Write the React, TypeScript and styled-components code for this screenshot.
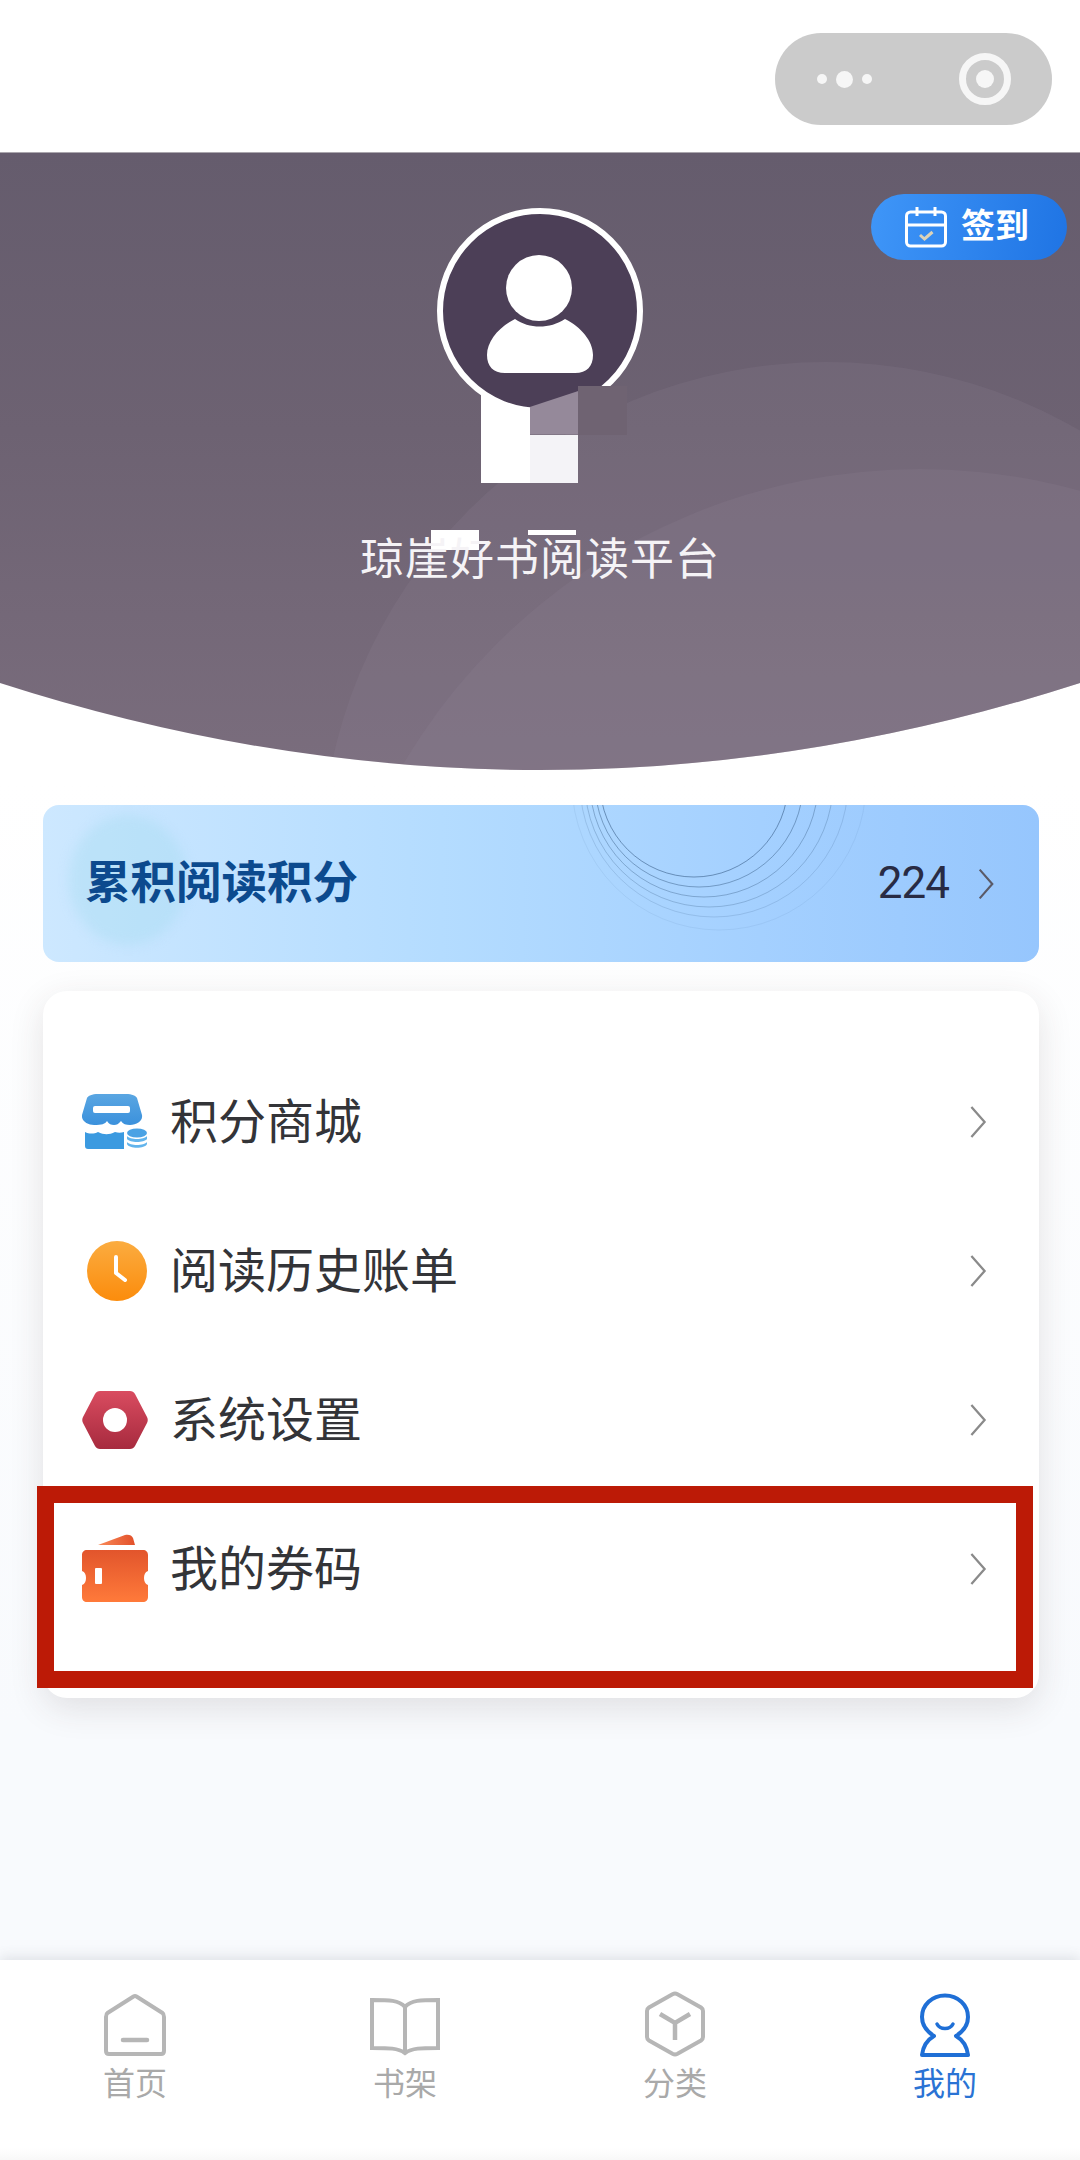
import styled, { createGlobalStyle } from "styled-components";
import { ReactNode } from "react";

const RING_RADII = [94, 104, 114, 124, 134, 147];

const MENU_ITEMS: { label: string; icon: ReactNode; marked?: boolean }[] = [
  { label: "积分商城", icon: <ShopIcon /> },
  { label: "阅读历史账单", icon: <ClockIcon /> },
  { label: "系统设置", icon: <NutIcon /> },
  { label: "我的券码", icon: <TicketIcon />, marked: true },
];

const TABS: { label: string; icon: ReactNode; active?: boolean }[] = [
  { label: "首页", icon: <HomeIcon /> },
  { label: "书架", icon: <BookIcon /> },
  { label: "分类", icon: <CubeIcon /> },
  { label: "我的", icon: <MeIcon />, active: true },
];

export default function App() {
  return (
    <Page>
      <GlobalStyle />
      <Header>
        <Capsule>
          <Dots>
            <Dot size={10} />
            <Dot size={17} />
            <Dot size={10} />
          </Dots>
          <Target />
        </Capsule>
      </Header>

      <Hero>
        <Swell size={1010} left={321} top={209} />
        <Swell size={1200} left={320} top={316} />
        <SignIn>
          <CalendarIcon />
          <SignInText>签到</SignInText>
        </SignIn>
        <Avatar>
          <PersonIcon />
        </Avatar>
        <Mosaic>
          <MosaicCell tone="#ffffff" />
          <MosaicCell tone="#95899a" raised cut="polygon(0 21px, 100% 5px, 100% 100%, 0 100%)" />
          <MosaicCell tone="#6f6372" raised />
          <MosaicCell tone="#ffffff" />
          <MosaicCell tone="#f4f3f7" />
        </Mosaic>
        <Title>
          <TitleMask left={71} width={48} height={20} />
          <TitleMask left={168} width={48} height={5} />
          <TitleText>琼崖好书阅读平台</TitleText>
        </Title>
      </Hero>

      <PointsCard>
        <PointsGlow />
        <Rings viewBox="0 0 400 157" aria-hidden="true">
          {RING_RADII.map((r, i) => (
            <circle
              key={r}
              cx={200 + i * 5}
              cy="-22"
              r={r}
              fill="none"
              stroke="#33577f"
              strokeWidth="0.8"
              opacity={0.7 - i * 0.12}
            />
          ))}
        </Rings>
        <PointsLabel>累积阅读积分</PointsLabel>
        <PointsValue>224</PointsValue>
        <Chevron size={18} height={36} color="#5a5a68" />
      </PointsCard>

      <Menu>
        {MENU_ITEMS.map((item) => (
          <MenuRow key={item.label}>
            <MenuIcon>{item.icon}</MenuIcon>
            <MenuLabel>{item.label}</MenuLabel>
            <Chevron size={20} height={34} color="#8a8a8a" />
            {item.marked ? <Marker /> : null}
          </MenuRow>
        ))}
      </Menu>

      <Spacer />

      <TabBar>
        {TABS.map((tab) => (
          <Tab key={tab.label} active={tab.active}>
            <TabIcon>{tab.icon}</TabIcon>
            {tab.label}
          </Tab>
        ))}
      </TabBar>
    </Page>
  );
}

function Chevron({ size, height, color }: { size: number; height: number; color: string }) {
  return (
    <ChevronSvg width={size} height={height} viewBox="0 0 20 36" fill="none" aria-hidden="true">
      <path d="M3 2l14 16L3 34" stroke={color} strokeWidth="2.4" />
    </ChevronSvg>
  );
}

function CalendarIcon() {
  return (
    <svg width="42" height="42" viewBox="0 0 42 42" fill="none" aria-hidden="true">
      <rect x="1.5" y="6" width="39" height="34" rx="4" stroke="#fff" strokeWidth="3" />
      <path d="M1.5 19h39M12 1v9M30 1v9" stroke="#fff" strokeWidth="3" />
      <path d="M15 29l4.500 4 8-7" stroke="#dcd3b8" strokeWidth="3" />
    </svg>
  );
}

function PersonIcon() {
  return (
    <svg width="106" height="118" viewBox="0 0 106 118" aria-hidden="true">
      <circle cx="52" cy="33" r="33" fill="#fff" />
      <path
        d="M28 64c14 10 35 10 50 0 16 8 28 22 28 36 0 11-6 18-18 18H18C6 118 0 111 0 100c0-14 12-28 28-36z"
        fill="#fff"
      />
    </svg>
  );
}

function ShopIcon() {
  return (
    <svg width="68" height="56" viewBox="0 0 68 56" aria-hidden="true">
      <defs>
        <linearGradient id="awning" x1="0" y1="0" x2="0" y2="1">
          <stop offset="0" stopColor="#5aa6e2" />
          <stop offset="1" stopColor="#3b91dc" />
        </linearGradient>
      </defs>
      <path
        d="M16 0h28c6 0 10 2 11 4l5 17c1 6-5 10-12 10-4 0-7-1-9-4-3 3-4 4-7 4s-5-1-7-4c-2 3-5 4-13 4-6 0-13-4-12-10l5-17c1-2 5-4 11-4z"
        fill="url(#awning)"
      />
      <rect x="11" y="12" width="37" height="7" rx="2" fill="#fff" />
      <path d="M3 38c4 2 9 2 13 0 6 3 11 3 17 0 3 1 6 1 9 0v17H6c-2 0-3-1-3-3z" fill="#3b9ae0" />
      <ellipse cx="55" cy="39" rx="10" ry="4.500" fill="#4aa2e4" />
      <path d="M45 42c3 4 17 4 20 0v3c-3 4-17 4-20 0z" fill="#62b4ec" />
      <path d="M45 48c3 4 17 4 20 0v2c-2 5-18 5-20 0z" fill="#62b4ec" />
    </svg>
  );
}

function ClockIcon() {
  return (
    <ClockSvg width="62" height="62" viewBox="0 0 62 62" aria-hidden="true">
      <defs>
        <linearGradient id="clock" x1="0" y1="0" x2="0" y2="1">
          <stop offset="0" stopColor="#fbac40" />
          <stop offset="1" stopColor="#fb8c0c" />
        </linearGradient>
      </defs>
      <circle cx="31" cy="31" r="30" fill="url(#clock)" />
      <path d="M30 17v16l9 7" fill="none" stroke="#fff" strokeWidth="4" strokeLinecap="round" strokeLinejoin="round" />
    </ClockSvg>
  );
}

function NutIcon() {
  return (
    <svg width="66" height="60" viewBox="0 0 66 60" aria-hidden="true">
      <defs>
        <linearGradient id="nut" x1="0" y1="0" x2="0" y2="1">
          <stop offset="0" stopColor="#d94c60" />
          <stop offset="1" stopColor="#a72a3e" />
        </linearGradient>
      </defs>
      <path
        d="M18 1h30c2 0 4 1 5 3l12 23c1 2 1 4 0 6L53 56c-1 2-3 3-5 3H18c-2 0-4-1-5-3L1 33c-1-2-1-4 0-6L13 4c1-2 3-3 5-3z"
        fill="url(#nut)"
      />
      <circle cx="33" cy="30" r="12" fill="#fff" />
    </svg>
  );
}

function TicketIcon() {
  return (
    <svg width="68" height="70" viewBox="0 0 68 70" aria-hidden="true">
      <defs>
        <linearGradient id="ticket" x1="0" y1="0" x2="0" y2="1">
          <stop offset="0" stopColor="#e2552c" />
          <stop offset="1" stopColor="#ff7a3a" />
        </linearGradient>
        <linearGradient id="flap" x1="0" y1="0" x2="1" y2="0">
          <stop offset="0" stopColor="#f98a58" />
          <stop offset="1" stopColor="#e2502a" />
        </linearGradient>
      </defs>
      <path d="M16 11L43 1c3-1 7 0 8 3l2 7z" fill="url(#flap)" />
      <path
        d="M5 16h56c3 0 5 2 5 5v16c-3 1-4 4-4 7s1 6 4 7v12c0 3-2 5-5 5H5c-3 0-5-2-5-5V51c3-1 4-4 4-7s-1-6-4-7V21c0-3 2-5 5-5z"
        fill="url(#ticket)"
      />
      <rect x="13" y="34" width="7" height="16" rx="1" fill="#fff" />
    </svg>
  );
}

function HomeIcon() {
  return (
    <svg width="64" height="64" viewBox="0 0 64 64" fill="none" aria-hidden="true">
      <path
        d="M30.500 3.500L4.500 20C3 21 3 22 3 24v34c0 2 1 3 3 3h52c2 0 3-1 3-3V24c0-2 0-3-1.500-4L33.500 3.500c-1-.6-2-.6-3 0z"
        stroke="#b6b6b6"
        strokeWidth="4"
      />
      <path d="M20 47h24" stroke="#b6b6b6" strokeWidth="4.500" strokeLinecap="round" />
    </svg>
  );
}

function BookIcon() {
  return (
    <svg width="72" height="60" viewBox="0 0 72 60" fill="none" aria-hidden="true">
      <path
        d="M36 10C30 3 20 3 3 3v48c17 0 26 0 33 5 7-5 16-5 33-5V3C52 3 42 3 36 10zM36 10v46"
        stroke="#b6b6b6"
        strokeWidth="4"
      />
    </svg>
  );
}

function CubeIcon() {
  return (
    <svg width="62" height="66" viewBox="0 0 62 66" fill="none" aria-hidden="true">
      <path
        d="M28.500 3.200L5 16.500C3.500 17.500 3 18.500 3 20v26c0 1.500.5 2.500 2 3.500l23.500 13.300c1.600.8 3.400.8 5 0L57 49.500c1.500-1 2-2 2-3.500V20c0-1.500-.5-2.500-2-3.500L33.500 3.200c-1.600-.8-3.400-.8-5 0z"
        stroke="#b6b6b6"
        strokeWidth="4"
      />
      <path d="M16 23l15 9 15-9M31 32v17" stroke="#b6b6b6" strokeWidth="4.500" />
    </svg>
  );
}

function MeIcon() {
  return (
    <svg width="52" height="64" viewBox="0 0 52 64" fill="none" aria-hidden="true">
      <path
        d="M15 43C7 38 3 31 3 24 3 12 13 2.500 26 2.500S49 12 49 24c0 7-4 14-12 19 7 4 11 11 12 19H3c1-8 5-15 12-19z"
        stroke="#1f6fd6"
        strokeWidth="4"
        strokeLinejoin="round"
      />
      <path d="M18 31c3 6 13 6 16 0" stroke="#1f6fd6" strokeWidth="3.500" strokeLinecap="round" />
    </svg>
  );
}

const GlobalStyle = createGlobalStyle`
  html, body {
    margin: 0;
    padding: 0;
  }

  body {
    font-family: "Noto Sans CJK SC", "Noto Sans", sans-serif;
  }
`;

const Page = styled.div`
  width: 1080px;
  height: 2160px;
  display: flex;
  flex-direction: column;
  overflow: hidden;
  background: linear-gradient(180deg, #ffffff 0, #ffffff 780px, #f8fafd 1720px);
`;

const Header = styled.div`
  height: 152px;
  flex-shrink: 0;
  display: flex;
  justify-content: flex-end;
  padding: 33px 28px 0 0;
  box-sizing: border-box;
  background: #ffffff;
`;

const Capsule = styled.div`
  width: 277px;
  height: 92px;
  display: flex;
  align-items: center;
  justify-content: space-between;
  padding: 0 41px 0 42px;
  box-sizing: border-box;
  border-radius: 46px;
  background: #cbcbcb;
`;

const Dots = styled.div`
  display: flex;
  align-items: center;
  gap: 9px;
`;

const Dot = styled.span<{ size: number }>`
  width: ${({ size }) => size}px;
  height: ${({ size }) => size}px;
  border-radius: 50%;
  background: #f6f6f6;
`;

const Target = styled.span`
  width: 52px;
  height: 52px;
  box-sizing: border-box;
  border-radius: 50%;
  border: 7px solid #f6f6f6;
  display: flex;
  align-items: center;
  justify-content: center;

  &::after {
    content: "";
    width: 18px;
    height: 18px;
    border-radius: 50%;
    background: #f6f6f6;
  }
`;

const Hero = styled.div`
  position: relative;
  height: 618px;
  flex-shrink: 0;
  display: flex;
  flex-direction: column;
  align-items: center;
  padding-top: 55px;
  box-sizing: border-box;
  overflow: hidden;
  border-top: 1px solid #aaa6ad;
  background: linear-gradient(180deg, #655c6d 0%, #6d6272 45%, #7a6d7d 100%);
  clip-path: path("M0 0H1080V531Q540 705 0 531Z");
`;

const Swell = styled.div<{ size: number; left: number; top: number }>`
  position: absolute;
  width: ${({ size }) => size}px;
  height: ${({ size }) => size}px;
  left: ${({ left }) => left}px;
  top: ${({ top }) => top}px;
  border-radius: 50%;
  background: rgba(150, 135, 155, 0.16);
`;

const SignIn = styled.div`
  position: absolute;
  top: 41px;
  left: 871px;
  width: 196px;
  height: 66px;
  display: flex;
  align-items: center;
  padding-left: 34px;
  box-sizing: border-box;
  gap: 14px;
  border-radius: 33px;
  color: #ffffff;
  font-size: 34px;
  font-weight: 700;
  background: linear-gradient(100deg, #3f96f8, #1f74e4);
`;

const SignInText = styled.span`
  line-height: 44px;
  padding-bottom: 6px;
`;

const Avatar = styled.div`
  position: relative;
  z-index: 2;
  width: 206px;
  height: 206px;
  flex-shrink: 0;
  box-sizing: border-box;
  border: 6px solid #ffffff;
  border-radius: 50%;
  background: #4c3f57;
  display: flex;
  justify-content: center;
  padding-top: 41px;
`;

const Mosaic = styled.div`
  display: grid;
  grid-template-columns: repeat(3, 48.5px);
  grid-template-rows: repeat(2, 48.5px);
  margin: -28px 0 0 28px;
  flex-shrink: 0;
`;

const MosaicCell = styled.div<{ tone: string; raised?: boolean; cut?: string }>`
  position: relative;
  z-index: ${({ raised }) => (raised ? 3 : 1)};
  background: ${({ tone }) => tone};
  clip-path: ${({ cut }) => cut ?? "none"};
`;

const Title = styled.div`
  position: relative;
  margin-top: 43px;
`;

const TitleMask = styled.div<{ left: number; width: number; height: number }>`
  position: absolute;
  top: 4px;
  left: ${({ left }) => left}px;
  width: ${({ width }) => width}px;
  height: ${({ height }) => height}px;
  background: #ffffff;
`;

const TitleText = styled.div`
  position: relative;
  color: #f5f3f6;
  font-size: 44px;
  line-height: 60px;
  letter-spacing: 1px;
  white-space: nowrap;
`;

const PointsCard = styled.div`
  position: relative;
  height: 157px;
  flex-shrink: 0;
  margin: 35px 41px 0 43px;
  padding: 0 44px 0 42px;
  box-sizing: border-box;
  display: flex;
  align-items: center;
  overflow: hidden;
  border-radius: 16px;
  background: linear-gradient(90deg, #cde8ff 0%, #b4dcff 40%, #a4d0ff 72%, #96c6fd 100%);
`;

const PointsGlow = styled.div`
  position: absolute;
  left: 26px;
  top: 10px;
  width: 118px;
  height: 130px;
  border-radius: 50%;
  background: rgba(150, 215, 235, 0.28);
  filter: blur(6px);
`;

const Rings = styled.svg`
  position: absolute;
  left: 451px;
  top: 0;
  width: 400px;
  height: 157px;
`;

const PointsLabel = styled.div`
  position: relative;
  flex: 1;
  padding-bottom: 10px;
  color: #0c4a8e;
  font-size: 45.500px;
  font-weight: 700;
  line-height: 60px;
`;

const PointsValue = styled.div`
  position: relative;
  margin-right: 28px;
  padding-bottom: 2px;
  color: #282b44;
  font-family: Roboto, "Noto Sans", sans-serif;
  font-size: 44px;
  letter-spacing: -1px;
  line-height: 60px;
`;

const ChevronSvg = styled.svg`
  position: relative;
  flex-shrink: 0;
`;

const Menu = styled.div`
  height: 707px;
  flex-shrink: 0;
  margin: 29px 41px 0 43px;
  padding: 56px 0;
  box-sizing: border-box;
  border-radius: 24px;
  background: #ffffff;
  box-shadow: 0 10px 34px rgba(60, 50, 50, 0.13);
`;

const MenuRow = styled.div`
  position: relative;
  height: 149px;
  display: flex;
  align-items: center;
  padding: 0 51px 0 39px;
`;

const MenuIcon = styled.div`
  width: 88px;
  flex-shrink: 0;
  display: flex;
  align-items: center;
`;

const ClockSvg = styled.svg`
  margin-left: 4px;
`;

const MenuLabel = styled.div`
  flex: 1;
  padding-bottom: 8px;
  color: #333438;
  font-size: 48px;
  line-height: 64px;
`;

const Marker = styled.div`
  position: absolute;
  left: -6px;
  top: -8px;
  width: 996px;
  height: 202px;
  box-sizing: border-box;
  border: 17px solid #bc1a06;
`;

const Spacer = styled.div`
  flex: 1;
`;

const TabBar = styled.div`
  height: 200px;
  flex-shrink: 0;
  display: grid;
  grid-template-columns: repeat(4, 1fr);
  padding-top: 33px;
  box-sizing: border-box;
  background: linear-gradient(180deg, #ffffff 0, #ffffff 188px, #f8f8f8 200px);
  box-shadow: 0 -3px 12px rgba(70, 75, 90, 0.14);
`;

const Tab = styled.div<{ active?: boolean }>`
  display: flex;
  flex-direction: column;
  align-items: center;
  color: ${({ active }) => (active ? "#2a73d4" : "#a9a9a9")};
  font-size: 32px;
  line-height: 34px;
`;

const TabIcon = styled.div`
  height: 64px;
  margin-bottom: 7px;
  display: flex;
  align-items: flex-end;
  justify-content: center;
`;
